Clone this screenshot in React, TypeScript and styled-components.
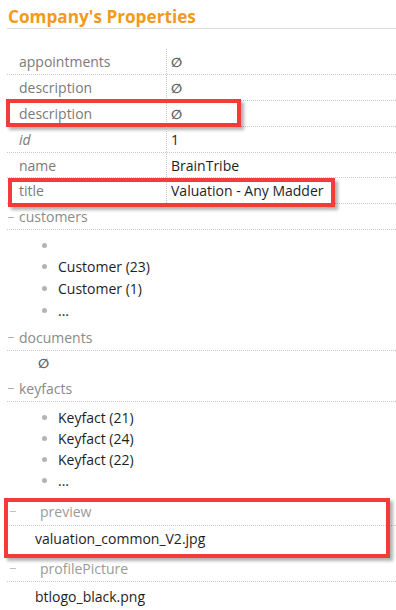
import React from "react";
import styled, { createGlobalStyle } from "styled-components";

const Global = createGlobalStyle`
  html, body { margin: 0; padding: 0; background: #fff; }
  body { font-family: "Open Sans", "Liberation Sans", sans-serif; font-size: 14px; color: #222; }
`;

const Page = styled.div`
  width: 396px;
  height: 610px;
  overflow: hidden;
  padding-left: 7px;
  box-sizing: border-box;
`;

const Title = styled.h1`
  margin: 0;
  padding-top: 5px;
  font-size: 17.2px;
  line-height: 23px;
  font-weight: 700;
  color: #f39a1c;
  border-bottom: 1px solid #dcdcdc;
  padding-left: 1px;
`;

const Table = styled.div`
  margin-top: 20px;
  display: flex;
  flex-direction: column;
`;

const Row = styled.div`
  position: relative;
  display: grid;
  grid-template-columns: 160px 1fr;
  height: 25.9px;
  border-bottom: 1px dotted #c8c8c8;
  box-sizing: border-box;
  align-items: center;
`;

const Label = styled.div<{ $italic?: boolean }>`
  height: 100%;
  display: flex;
  align-items: center;
  padding-left: 12px;
  border-right: 1px dotted #c8c8c8;
  color: #7a7a7a;
  font-style: ${(p) => (p.$italic ? "italic" : "normal")};
`;

const Value = styled.div`
  padding-left: 4px;
  color: #1e1e1e;
`;

const Null = styled.span`
  font-family: "DejaVu Sans", sans-serif;
  font-size: 13px;
  font-weight: 700;
  color: #5e5e5e;
`;

const Highlight = styled.div<{ $w: number; $l?: number; $t?: number; $b?: number }>`
  position: absolute;
  left: ${(p) => p.$l ?? -1}px;
  top: ${(p) => p.$t ?? -2}px;
  bottom: ${(p) => p.$b ?? -1}px;
  width: ${(p) => p.$w}px;
  border: 4px solid #f43b3b;
  box-sizing: border-box;
  box-shadow: 3px 3px 3px rgba(0, 0, 0, 0.3);
  pointer-events: none;
`;

const SectionHeader = styled.div`
  display: flex;
  align-items: center;
  height: 25.9px;
  padding-left: 1px;
  border-bottom: 1px dotted #c8c8c8;
  box-sizing: border-box;
  color: #8a8a8a;
`;

const Dash = styled.span`
  display: inline-block;
  width: 6px;
  height: 1px;
  background: #b0b0b0;
  margin-right: 5px;
  margin-top: 1px;
`;

const List = styled.ul<{ $top: number }>`
  list-style: none;
  margin: 0;
  padding: ${(p) => p.$top}px 0 4px 0;
`;

const Item = styled.li<{ $h: number }>`
  display: flex;
  align-items: center;
  height: ${(p) => p.$h}px;
  padding-left: 35px;
  color: #1e1e1e;
`;

const Bullet = styled.span`
  width: 5px;
  height: 5px;
  border-radius: 50%;
  background: #b4b4b4;
  margin-right: 11px;
  flex: none;
`;

const NullRow = styled.div`
  height: 25px;
  display: flex;
  align-items: center;
  padding-left: 31px;
  padding-top: 1px;
  box-sizing: border-box;
`;

const FileSection = styled.div`
  position: relative;
`;

const FileHeader = styled.div<{ $h: number }>`
  display: flex;
  align-items: center;
  height: ${(p) => p.$h}px;
  padding-top: 4px;
  padding-left: 3px;
  border-bottom: 1px dotted #c8c8c8;
  box-sizing: border-box;
  color: #9a9a9a;
`;

const LongDash = styled.span`
  display: inline-block;
  width: 6px;
  height: 1px;
  background: #c0c0c0;
  margin-right: 24px;
`;

const FileValue = styled.div<{ $h: number }>`
  height: ${(p) => p.$h}px;
  display: flex;
  align-items: center;
  padding-left: 28px;
  color: #1e1e1e;
`;

const NullSign = () => <Null>∅</Null>;

export default function App() {
  return (
    <>
      <Global />
      <Page>
        <Title>Company's Properties</Title>
        <Table>
          <Row>
            <Label>appointments</Label>
            <Value><NullSign /></Value>
          </Row>
          <Row>
            <Label>description</Label>
            <Value><NullSign /></Value>
          </Row>
          <Row>
            <Label>description</Label>
            <Value><NullSign /></Value>
            <Highlight $w={235} />
          </Row>
          <Row>
            <Label $italic>id</Label>
            <Value>1</Value>
          </Row>
          <Row>
            <Label>name</Label>
            <Value>BrainTribe</Value>
          </Row>
          <Row>
            <Label>title</Label>
            <Value>Valuation - Any Madder</Value>
            <Highlight $w={327} $l={1} $t={0} $b={-4} />
          </Row>
        </Table>
        <SectionHeader><Dash />customers</SectionHeader>
        <List $top={4}>
          <Item $h={21.7}><Bullet /></Item>
          <Item $h={21.7}><Bullet />Customer (23)</Item>
          <Item $h={21.7}><Bullet />Customer (1)</Item>
          <Item $h={21.7}><Bullet />...</Item>
        </List>
        <SectionHeader><Dash />documents</SectionHeader>
        <NullRow><NullSign /></NullRow>
        <SectionHeader><Dash />keyfacts</SectionHeader>
        <List $top={5}>
          <Item $h={21}><Bullet />Keyfact (21)</Item>
          <Item $h={21}><Bullet />Keyfact (24)</Item>
          <Item $h={21}><Bullet />Keyfact (22)</Item>
          <Item $h={21}><Bullet />...</Item>
        </List>
        <FileSection>
          <FileHeader $h={31}><LongDash />preview</FileHeader>
          <FileValue $h={26}>valuation_common_V2.jpg</FileValue>
          <Highlight $w={386} $l={-3} $t={3} $b={-6} />
        </FileSection>
        <FileSection>
          <FileHeader $h={30}><LongDash />profilePicture</FileHeader>
          <FileValue $h={30}>btlogo_black.png</FileValue>
        </FileSection>
      </Page>
    </>
  );
}
